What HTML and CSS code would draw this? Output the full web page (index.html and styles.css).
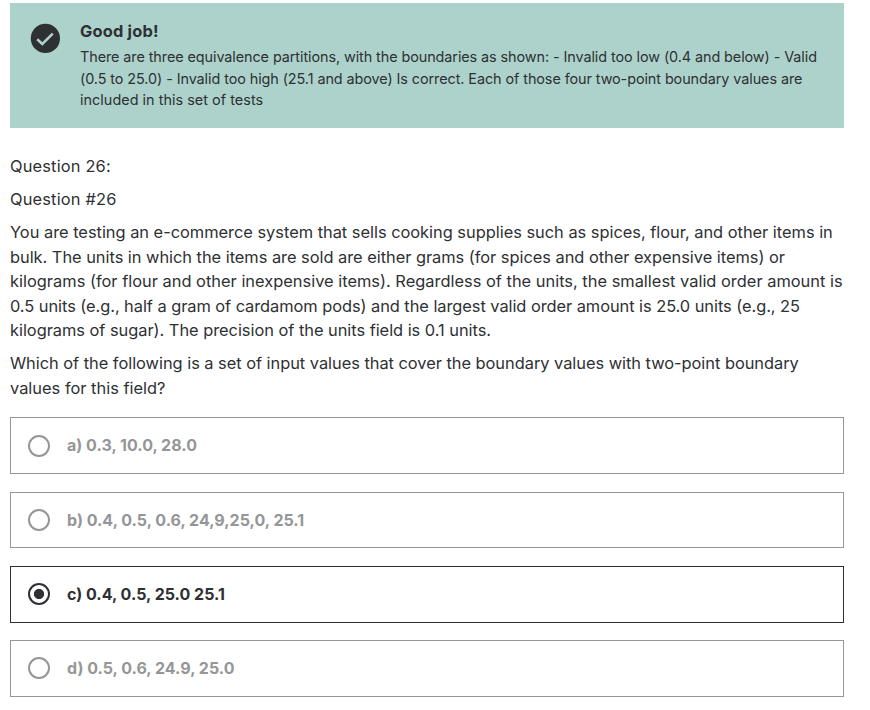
FILE: index.html
```html
<!DOCTYPE html>
<html lang="en">
<head>
<meta charset="utf-8">
<title>Question 26</title>
<link rel="stylesheet" href="styles.css">
</head>
<body>
<main class="quiz">
  <section class="feedback">
    <svg class="check" viewBox="0 0 30 30" aria-hidden="true"><circle cx="15.4" cy="15.4" r="14.6" fill="#2e3033"/><path d="M7.2 16.2 12.3 21 22.8 10.6" fill="none" stroke="#acd2cb" stroke-width="2.6"/></svg>
    <div class="feedback-body">
      <h2>Good job!</h2>
      <p>There are three equivalence partitions, with the boundaries as shown: - Invalid too low (0.4 and below) - Valid<br>
      (0.5 to 25.0) - Invalid too high (25.1 and above) Is correct. Each of those four two-point boundary values are<br>
      <span class="loose">included in this set of tests</span></p>
    </div>
  </section>
  <section class="question">
    <p class="label">Question 26:</p>
    <p class="label">Question #26</p>
    <p><span class="even">You are testing an e-commerce system that sells cooking supplies such as spices, flour, and other items in</span><br>
    bulk. The units in which the items are sold are either grams (for spices and other expensive items) or<br>
    <span class="wide">kilograms (for flour and other inexpensive items). Regardless of the units, the smallest valid order amount is</span><br>
    <span class="tight">0.5 units (e.g., half a gram of cardamom pods) and the largest valid order amount is 25.0 units (e.g., 25</span><br>
    kilograms of sugar). The precision of the units field is 0.1 units.</p>
    <p>Which of the following is a set of input values that cover the boundary values with two-point boundary<br>
    <span class="wide">values for this field?</span></p>
  </section>
  <div class="options">
    <div class="option"><i class="radio"></i><span>a) 0.3, 10.0, 28.0</span></div>
    <div class="option"><i class="radio"></i><span>b) 0.4, 0.5, 0.6, 24,9,25,0, 25.1</span></div>
    <div class="option selected"><i class="radio"></i><span>c) 0.4, 0.5, 25.0 25.1</span></div>
    <div class="option"><i class="radio"></i><span>d) 0.5, 0.6, 24.9, 25.0</span></div>
  </div>
</main>
</body>
</html>
```
FILE: styles.css
```css
* { box-sizing: border-box; }
body { margin: 0; background: #fff; color: #2e3033; font-family: Inter, "Liberation Sans", sans-serif; }
.quiz { width: 834px; margin: 3px 0 0 10px; }
.feedback { display: flex; gap: 20px; height: 125px; padding: 17px 20px; background: #acd2cb; }
.check { width: 30px; height: 30px; margin-top: 3px; flex: none; }
.feedback-body { white-space: nowrap; }
h2 { margin: 0; font-size: 16.4px; line-height: 22px; font-weight: 700; letter-spacing: .2px; }
.feedback p { margin: 4px 0 0; font-size: 14.4px; line-height: 21.6px; letter-spacing: -.077px; }
.feedback .loose { letter-spacing: .035px; }
.question { padding-top: 26px; white-space: nowrap; font-size: 16.4px; line-height: 24.6px; letter-spacing: -.027px; }
.question p { margin: 0 0 8.4px; }
.question .label { letter-spacing: .17px; }
.even { letter-spacing: -.012px; }
.wide { letter-spacing: .01px; }
.tight { letter-spacing: -.05px; }
.options { display: grid; grid-auto-rows: 56.7px; gap: 17.55px; margin-top: 16.85px; }
.option { display: flex; align-items: center; gap: 17px; padding-left: 17px; border: 1px solid #959697; color: #959697; font-size: 16px; font-weight: 700; }
.option span { margin-top: -.8px; }
.radio { width: 22px; height: 22px; border: 2px solid #959697; border-radius: 50%; }
.selected { color: #2e3033; border-color: #2e3033; }
.selected .radio { border-color: #2e3033; background: radial-gradient(circle, #2e3033 0 4.7px, #fff 5.5px); }
```
